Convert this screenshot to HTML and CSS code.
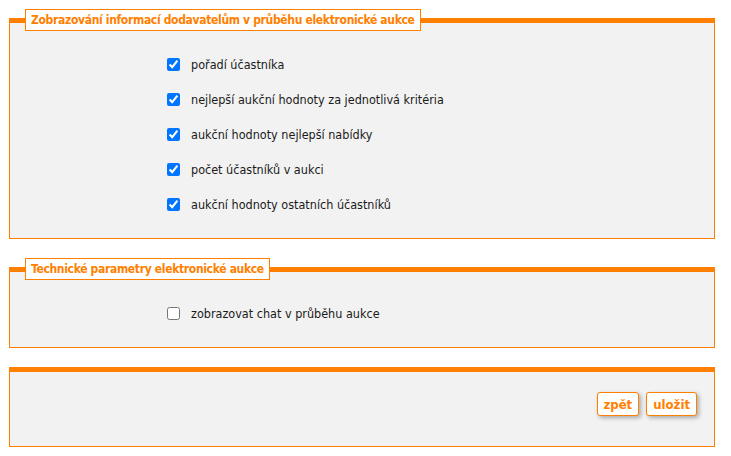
FILE: index.html
```html
<!DOCTYPE html>
<html lang="cs">
<head>
  <meta charset="UTF-8" />
  <title>Nastavení elektronické aukce</title>
  <link rel="stylesheet" href="styles.css">
</head>
<body>
  <div class="page">
    <fieldset class="box">
      <legend>Zobrazování informací dodavatelům v průběhu elektronické aukce</legend>
      <div class="options">
        <label class="opt"><input type="checkbox" checked> pořadí účastníka</label>
        <label class="opt"><input type="checkbox" checked> nejlepší aukční hodnoty za jednotlivá kritéria</label>
        <label class="opt"><input type="checkbox" checked> aukční hodnoty nejlepší nabídky</label>
        <label class="opt"><input type="checkbox" checked> počet účastníků v aukci</label>
        <label class="opt"><input type="checkbox" checked> aukční hodnoty ostatních účastníků</label>
      </div>
    </fieldset>

    <fieldset class="box">
      <legend>Technické parametry elektronické aukce</legend>
      <div class="options">
        <label class="opt"><input type="checkbox"> zobrazovat chat v průběhu aukce</label>
      </div>
    </fieldset>

    <fieldset class="box actions">
      <button class="btn" type="button">zpět</button>
      <button class="btn" type="button">uložit</button>
    </fieldset>
  </div>
</body>
</html>
```

FILE: styles.css
```css
body {
  margin: 0;
  background: #fff;
  font-family: 'DejaVu Sans Condensed', 'DejaVu Sans', Tahoma, sans-serif;
  font-size: 12.5px;
  color: #1a1a1a;
}

.page {
  padding: 9px 16px 0 9px;
}

.box {
  margin: 0 0 19px 0;
  padding: 0;
  min-width: 0;
  background: #f2f2f2;
  border: 1px solid #ff8000;
  border-top: 5px solid #ff8000;
}

.box legend {
  margin-left: 15px;
  padding: 0 5px;
  height: 20px;
  line-height: 20px;
  background: #fff;
  border: 1px solid #ff8000;
  color: #ff8000;
  font-weight: bold;
  font-size: 12px;
  letter-spacing: -0.33px;
}

.options {
  padding: 16px 0 16px 157px;
}

.opt {
  display: flex;
  align-items: center;
  height: 35px;
}

.opt input {
  margin: 0 11px 0 0;
  width: 13px;
  height: 13px;
}

.actions {
  margin-top: 1px;
  display: flex;
  justify-content: flex-end;
  gap: 7px;
  padding: 20px 17px 30px 0;
}

.btn {
  box-sizing: border-box;
  height: 24px;
  padding: 0 6px;
  background: #fff;
  border: 1px solid #ff8000;
  border-radius: 3px;
  color: #ff8000;
  font-family: inherit;
  font-weight: bold;
  font-size: 13px;
  box-shadow: 2px 2px 4px rgba(0, 0, 0, 0.3);
  cursor: pointer;
}
```
